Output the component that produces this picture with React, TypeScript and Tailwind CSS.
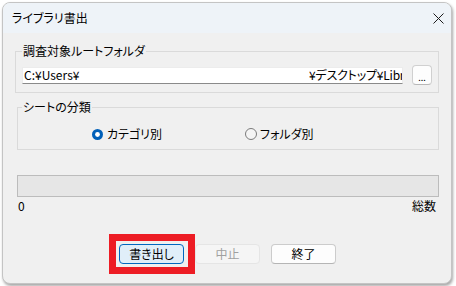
export default function App() {
  return (
    <div className="w-[456px] h-[286px] bg-white pl-[2px] pt-[2px] font-['Noto_Sans_CJK_JP',sans-serif] text-[12px] text-black [font-feature-settings:'palt']">
      <div className="w-[450px] h-[282px] rounded-[8px] border border-[#c4c4c4] bg-[#f0f0f0] overflow-hidden shadow-[1px_2px_3px_rgba(0,0,0,0.35)] flex flex-col">
        {/* title bar */}
        <div className="h-[30px] shrink-0 bg-[#eef3f8] flex items-center justify-between pl-[9px] pr-[7px]">
          <span className="leading-[14px]">ライブラリ書出</span>
          <svg width="11" height="11" viewBox="0 0 11 11">
            <path d="M0.5 0.5 L10.5 10.5 M10.5 0.5 L0.5 10.5" stroke="#1c1c1c" strokeWidth="1" />
          </svg>
        </div>

        <div className="flex flex-col">
          {/* root folder */}
          <fieldset className="mt-[11px] ml-[12px] mr-[12px] border border-[#dadada]">
            <legend className="ml-[6px] px-[1px] leading-[14px]">調査対象ルートフォルダ</legend>
            <div className="flex items-center gap-[9px] pl-[6px] pt-[7px] pb-[7px]">
              <div className="w-[381px] h-[17px] shrink-0 bg-white border border-[#ececec] border-b-[#8a8a8a] flex items-center justify-between overflow-hidden whitespace-nowrap">
                <span className="pl-[1px] leading-[14px]">C:¥Users¥</span>
                <span className="w-[93px] shrink-0 overflow-hidden leading-[14px] tracking-[-0.2px]">¥デスクトップ¥Libra</span>
              </div>
              <div className="w-[20px] h-[20px] shrink-0 rounded-[4px] bg-[#fdfdfd] border border-[#d0d0d0] border-b-[#b8b8b8] flex items-end justify-center">
                <span className="text-[9px] leading-[12px]">...</span>
              </div>
            </div>
          </fieldset>

          {/* sheet category */}
          <fieldset className="mt-[7px] ml-[14px] mr-[12px] border border-[#dadada]">
            <legend className="ml-[4px] px-[1px] leading-[14px]">シートの分類</legend>
            <div className="flex items-center pl-[74px] pt-[13px] pb-[8px]">
              <div className="w-[153px] flex items-center gap-[4px] h-[14px]">
                <svg width="11" height="11" viewBox="0 0 11 11">
                  <circle cx="5.5" cy="5.5" r="5.5" fill="#005fb8" />
                  <circle cx="5.5" cy="5.5" r="2.4" fill="#ffffff" />
                </svg>
                <span className="leading-[14px]">カテゴリ別</span>
              </div>
              <div className="flex items-center gap-[3px] h-[14px]">
                <svg width="12" height="12" viewBox="0 0 12 12">
                  <circle cx="6" cy="6" r="5.5" fill="#f4f4f4" stroke="#7a7a7a" strokeWidth="1" />
                </svg>
                <span className="leading-[14px]">フォルダ別</span>
              </div>
            </div>
          </fieldset>

          {/* progress */}
          <div className="mt-[25px] ml-[14px] mr-[12px] h-[22px] border border-[#bcbcbc] bg-[#e6e6e6]" />
          <div className="mt-[2px] ml-[15px] mr-[15px] flex justify-between leading-[14px]">
            <span>0</span>
            <span>総数</span>
          </div>

          {/* buttons */}
          <div className="mt-[31px] ml-[116px] flex gap-[11px]">
            <div className="relative">
              <div className="w-[65px] h-[20px] rounded-[4px] bg-[#e0eef9] border border-[#0067c0] flex items-center justify-center leading-[14px]">
                書き出し
              </div>
              <div className="absolute -left-[10px] -top-[10px] w-[86px] h-[40px] border-[7px] border-[#ed1c24] pointer-events-none" />
            </div>
            <div className="w-[65px] h-[20px] rounded-[4px] bg-[#f5f5f5] border border-[#e5e5e5] text-[#a0a0a0] flex items-center justify-center leading-[14px]">
              中止
            </div>
            <div className="w-[65px] h-[20px] rounded-[4px] bg-[#fdfdfd] border border-[#cccccc] border-b-[#b5b5b5] flex items-center justify-center leading-[14px]">
              終了
            </div>
          </div>
        </div>
      </div>
    </div>
  );
}
